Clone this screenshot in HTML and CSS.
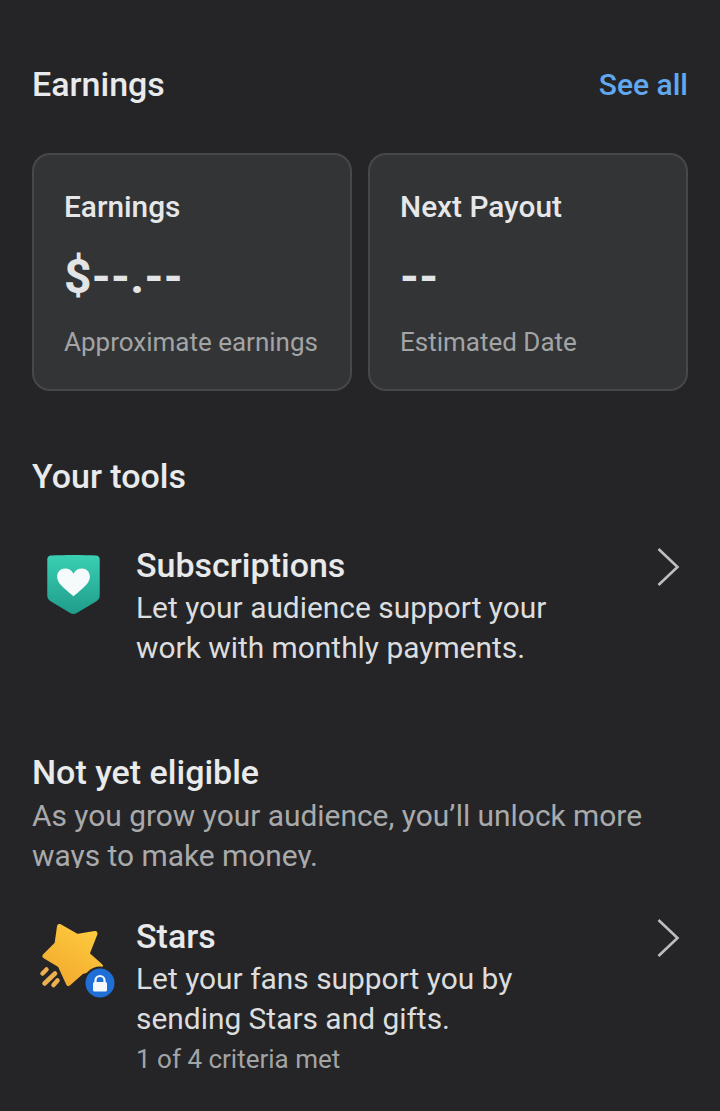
FILE: index.html
```html
<!DOCTYPE html>
<html lang="en">
<head>
  <meta charset="UTF-8">
  <meta name="viewport" content="width=device-width, initial-scale=1.0">
  <title>Earnings</title>
  <link rel="stylesheet" href="styles.css">
</head>
<body>
  <div class="page">
    <div class="section-head">
      <h2 class="heading">Earnings</h2>
      <a class="see-all">See all</a>
    </div>

    <div class="cards">
      <div class="card">
        <div class="card-title">Earnings</div>
        <div class="card-value">$--.--</div>
        <div class="card-note">Approximate earnings</div>
      </div>
      <div class="card">
        <div class="card-title">Next Payout</div>
        <div class="card-value">--</div>
        <div class="card-note">Estimated Date</div>
      </div>
    </div>

    <h2 class="heading tools-heading">Your tools</h2>
    <div class="tool tool-subs">
      <div class="tool-icon">
        <svg width="59" height="68" viewBox="0 0 54 62">
          <defs>
            <linearGradient id="shieldFill" x1="0" y1="0" x2="0" y2="1">
              <stop offset="0" stop-color="#3ad0b4"/>
              <stop offset="1" stop-color="#1f9c8b"/>
            </linearGradient>
          </defs>
          <path d="M3 5.500C3 3.500 4.500 2.300 6.500 2.200C19 1.400 35 1.400 47.500 2.200C49.500 2.300 51 3.500 51 5.500V38.500C51 41 50 42.700 48 44L30 54.800C28 56 26 56 24 54.800L6 44C4 42.700 3 41 3 38.500Z" fill="url(#shieldFill)"/>
          <path d="M27 39.500C25.800 38.500 24 37 20 33.500C15 29.200 12 26 12 21.500C12 17 15.300 14 19.300 14C22.600 14 25.400 15.600 27 18.800C28.600 15.600 31.400 14 34.700 14C38.700 14 42 17 42 21.500C42 26 39 29.200 34 33.500C30 37 28.200 38.500 27 39.500Z" fill="#f4fbfa"/>
        </svg>
      </div>
      <div class="tool-body">
        <div class="tool-name">Subscriptions</div>
        <div class="tool-text">Let your audience support your<br>work with monthly payments.</div>
      </div>
      <svg class="chevron" width="24" height="40" viewBox="0 0 24 40"><path d="M2.500 2L21.500 20L2.500 38" fill="none" stroke="#bdbec0" stroke-width="2.600"/></svg>
    </div>

    <h2 class="heading eligible-heading">Not yet eligible</h2>
    <p class="eligible-text">As you grow your audience, you’ll unlock more ways to make money.</p>

    <div class="tool tool-stars">
      <div class="tool-icon">
        <svg width="87" height="83" viewBox="0 0 87 83">
          <defs>
            <linearGradient id="starFill" x1="0.800" y1="0" x2="0.200" y2="1">
              <stop offset="0" stop-color="#fdcb3e"/>
              <stop offset="1" stop-color="#f3a92e"/>
            </linearGradient>
          </defs>
          <path d="M27.500 6.500L45 16.500L63 13.500L55 34L68.500 46L50 51.500L36.500 63.500L28 45L13 36L25 24Z" fill="url(#starFill)" stroke="url(#starFill)" stroke-width="5" stroke-linejoin="round"/>
          <g stroke="#eeb04e" stroke-width="4.500" stroke-linecap="round">
            <path d="M10.500 53.500L14.500 49.500"/>
            <path d="M12.500 63.500L23 53.500"/>
            <path d="M21.500 65L25.500 60.500"/>
          </g>
          <circle cx="68" cy="63" r="16.500" fill="#252527"/>
          <circle cx="68" cy="63" r="14.500" fill="#1f6fd6"/>
          <path d="M63.500 63V60.500C63.500 57.800 65.500 56 68 56C70.500 56 72.500 57.800 72.500 60.500V63" fill="none" stroke="#f5f8fd" stroke-width="2.200"/>
          <rect x="61" y="62" width="14" height="9.500" rx="1.500" fill="#f5f8fd"/>
        </svg>
      </div>
      <div class="tool-body">
        <div class="tool-name">Stars</div>
        <div class="tool-text">Let your fans support you by<br>sending Stars and gifts.</div>
        <div class="tool-note">1 of 4 criteria met</div>
      </div>
      <svg class="chevron" width="24" height="40" viewBox="0 0 24 40"><path d="M2.500 2L21.500 20L2.500 38" fill="none" stroke="#bdbec0" stroke-width="2.600"/></svg>
    </div>
  </div>
</body>
</html>
```

FILE: styles.css
```css
*{
  margin: 0;
  padding: 0;
  box-sizing: border-box;
}
html,body{
  height: 100%;
}
body{
  background-color: #252527;
  color: #e8e9ea;
  font-family: Roboto, "Liberation Sans", sans-serif;
  overflow: hidden;
}
.page{
  padding: 64px 32px 0;
}
.section-head{
  display: flex;
  justify-content: space-between;
  align-items: center;
  height: 40px;
}
.heading{
  font-size: 34px;
  line-height: 40px;
  font-weight: 500;
  color: #e9eaeb;
}
.see-all{
  font-size: 30px;
  font-weight: 500;
  color: #62a8ee;
}

/* two summary cards */
.cards{
  display: grid;
  grid-template-columns: 1fr 1fr;
  gap: 16px;
  margin-top: 49px;
}
.card{
  height: 238px;
  padding: 34px 10px 0 30px;
  background-color: #333436;
  border: 2px solid #47484a;
  border-radius: 18px;
}
.card-title{
  font-size: 29.800px;
  line-height: 36px;
  font-weight: 500;
  color: #e6e7e8;
}
.card-value{
  margin-top: 24px;
  font-size: 48px;
  line-height: 56px;
  font-weight: 700;
  letter-spacing: 0.300px;
  color: #e3e4e6;
}
.card-note{
  margin-top: 21px;
  font-size: 26px;
  line-height: 32px;
  color: #a3a4a6;
}

.tools-heading{
  margin-top: 65px;
}

/* tool rows */
.tool{
  display: flex;
  align-items: flex-start;
}
.tool-subs{
  margin-top: 46px;
}
.tool-stars{
  margin-top: 45px;
}
.tool-icon{
  width: 104px;
  flex-shrink: 0;
  display: flex;
}
.tool-subs .tool-icon{
  padding: 11px 0 0 12px;
}
.tool-stars .tool-icon{
  padding-top: 7px;
}
.tool-body{
  flex: 1;
}
.tool-name{
  font-size: 34px;
  line-height: 46px;
  font-weight: 500;
  color: #e8e9ea;
}
.tool-text{
  font-size: 29.900px;
  line-height: 40px;
  color: #dcdddf;
}
.tool-note{
  font-size: 26px;
  line-height: 40px;
  color: #a3a4a6;
}
.chevron{
  flex-shrink: 0;
  margin: 5px 8px 0 0;
}

.eligible-heading{
  margin-top: 84px;
}
/* only two lines fit, the second is cut at the descenders */
.eligible-text{
  height: 72px;
  margin-top: 4px;
  overflow: hidden;
  font-size: 29.900px;
  line-height: 40px;
  color: #a9aaac;
}
```
